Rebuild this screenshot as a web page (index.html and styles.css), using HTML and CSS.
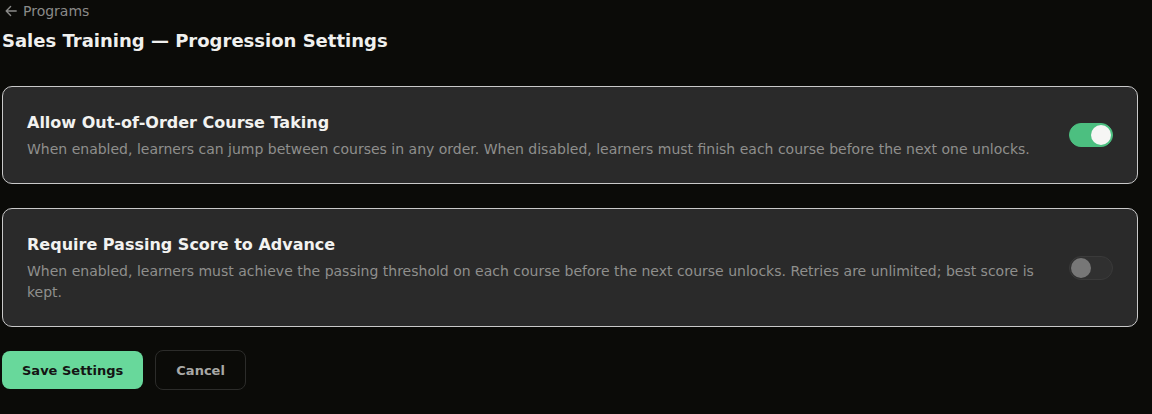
FILE: index.html
```html
<!DOCTYPE html>
<html>
<head>
<meta charset="utf-8">
<link rel="stylesheet" href="styles.css">
</head>
<body>
<div class="page">
  <a class="back" href="#"><svg class="back-icon" width="12" height="12" viewBox="0 0 12 12"><path d="M11.2 6H1.2M5.6 1.6L1.2 6l4.4 4.4" fill="none" stroke="currentColor" stroke-width="1.4" stroke-linecap="round" stroke-linejoin="round"/></svg>Programs</a>
  <h1 class="title">Sales Training — Progression Settings</h1>

  <div class="cards">
    <div class="card">
      <div class="card-text">
        <div class="card-title">Allow Out-of-Order Course Taking</div>
        <div class="card-desc">When enabled, learners can jump between courses in any order. When disabled, learners must finish each course before the next one unlocks.</div>
      </div>
      <div class="toggle on"><span class="knob"></span></div>
    </div>
    <div class="card">
      <div class="card-text">
        <div class="card-title">Require Passing Score to Advance</div>
        <div class="card-desc">When enabled, learners must achieve the passing threshold on each course before the next course unlocks. Retries are unlimited; best score is kept.</div>
      </div>
      <div class="toggle"><span class="knob"></span></div>
    </div>
  </div>

  <div class="actions">
    <button class="btn btn-primary">Save Settings</button>
    <button class="btn btn-ghost">Cancel</button>
  </div>
</div>
</body>
</html>
```
FILE: styles.css
```css
html, body {
  margin: 0;
  padding: 0;
  background: #0b0b08;
  font-family: "DejaVu Sans", sans-serif;
  color: #eeeeee;
}
.page {
  padding: 1px 14px 0 2px;
}
.back {
  display: flex;
  align-items: center;
  gap: 6px;
  color: #8a8a88;
  text-decoration: none;
  font-size: 14px;
  line-height: 20px;
  padding-left: 3px;
}
.back-icon {
  display: block;
}
.title {
  margin: 9px 0 0 0;
  font-size: 18px;
  line-height: 22px;
  font-weight: bold;
  color: #f0f0ee;
}
.cards {
  margin-top: 34px;
  display: flex;
  flex-direction: column;
  gap: 24px;
}
.card {
  display: flex;
  align-items: center;
  gap: 24px;
  background: #2a2a2a;
  border: 1px solid #c9c9c9;
  border-radius: 10px;
  padding: 25px 24px 23px 24px;
}
.card-text {
  flex: 1;
  min-width: 0;
}
.card-title {
  font-size: 16px;
  line-height: 22px;
  font-weight: bold;
  color: #f2f2f0;
}
.card-desc {
  margin-top: 5px;
  font-size: 14px;
  line-height: 21px;
  color: #8f8f8d;
}
.toggle {
  flex: none;
  width: 44px;
  height: 24px;
  margin-bottom: 2px;
  box-sizing: border-box;
  border-radius: 12px;
  background: #303030;
  border: 1px solid #3a3a3a;
  position: relative;
}
.toggle .knob {
  position: absolute;
  top: 1px;
  left: 1px;
  width: 20px;
  height: 20px;
  border-radius: 50%;
  background: #777777;
}
.toggle.on {
  background: #4cbf80;
  border-color: #4cbf80;
}
.toggle.on .knob {
  left: auto;
  right: 1px;
  background: #f6f6f4;
}
.actions {
  margin-top: 23px;
  display: flex;
  align-items: center;
  gap: 12px;
}
.btn {
  font-family: "DejaVu Sans", sans-serif;
  font-size: 13px;
  font-weight: bold;
  border-radius: 8px;
  cursor: pointer;
}
.btn-primary {
  background: #68d89b;
  color: #141414;
  border: none;
  height: 38px;
  padding: 0 20px;
}
.btn-ghost {
  background: transparent;
  color: #a8a8a6;
  border: 1px solid #2c2c2a;
  height: 40px;
  padding: 0 20px;
}
```
